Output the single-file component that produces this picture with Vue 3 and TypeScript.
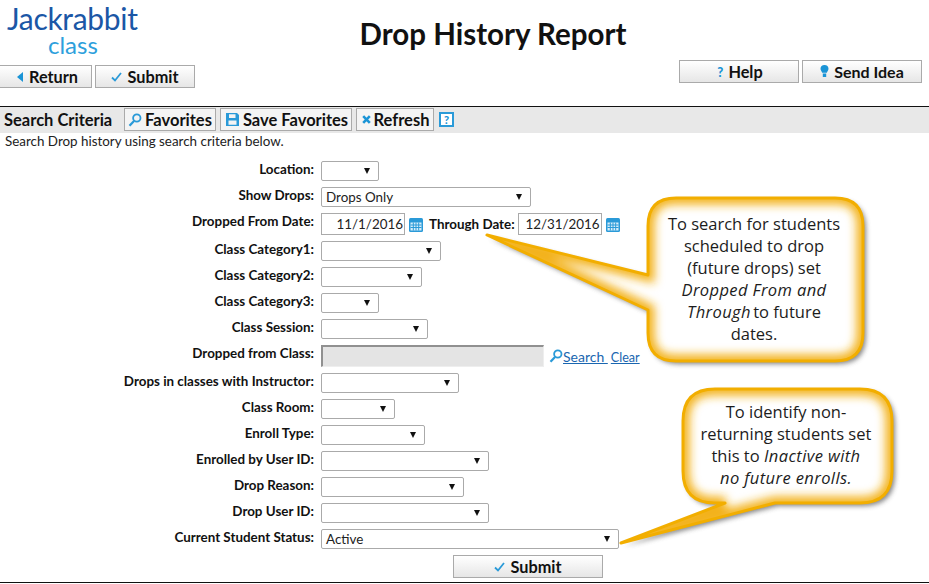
<script setup lang="ts">
interface Row { label: string; width?: number; value?: string; kind?: string }
const rows: Row[] = [
  { label: 'Location:', width: 58 },
  { label: 'Show Drops:', width: 210, value: 'Drops Only' },
  { label: 'Dropped From Date:', kind: 'dates' },
  { label: 'Class Category1:', width: 120 },
  { label: 'Class Category2:', width: 101 },
  { label: 'Class Category3:', width: 58 },
  { label: 'Class Session:', width: 107 },
  { label: 'Dropped from Class:', kind: 'search' },
  { label: 'Drops in classes with Instructor:', width: 138 },
  { label: 'Class Room:', width: 74 },
  { label: 'Enroll Type:', width: 104 },
  { label: 'Enrolled by User ID:', width: 168 },
  { label: 'Drop Reason:', width: 143 },
  { label: 'Drop User ID:', width: 168 },
  { label: 'Current Student Status:', width: 298, value: 'Active' },
]
const callout1 = 'M676 198H835Q863 198 863 226V333Q863 361 835 361H676Q648 361 648 333V310L487 235L648 275V226Q648 198 676 198Z'
const callout2 = 'M715 389H860Q892 389 892 421V471Q892 503 860 503H775L621 543L725 503H715Q683 503 683 471V421Q683 389 715 389Z'
</script>

<template>
  <div class="page">
    <header class="top">
      <div class="left">
        <div class="logo">
          <div class="logo-main">Jackrabbit</div>
          <div class="logo-sub">class</div>
        </div>
        <div class="btns">
          <button class="btn b-return">
            <svg width="7" height="10" viewBox="0 0 7 10"><path d="M6 0V10L0 5Z" fill="#1a94d6" /></svg>
            Return
          </button>
          <button class="btn b-submit">
            <svg width="11" height="10" viewBox="0 0 11 10"><path d="M1 5.5 4 8.5 10 1" fill="none" stroke="#2a9ad8" stroke-width="1.8" /></svg>
            Submit
          </button>
        </div>
      </div>
      <h1>Drop History Report</h1>
      <div class="right">
        <button class="btn b-top b-help">
          <span class="q">?</span>
          Help
        </button>
        <button class="btn b-top b-idea">
          <svg width="9" height="13" viewBox="0 0 9 13"><path d="M4.5 0C2 0 .5 1.700.5 3.700c0 1.600 1.200 2.500 1.700 4H6.800c.5-1.500 1.700-2.400 1.700-4C8.500 1.700 7 0 4.500 0ZM2.800 8.500H6.200V12H2.800Z" fill="#1a94d6" /></svg>
          Send Idea
        </button>
      </div>
    </header>

    <section class="bar">
      <span class="bar-title">Search Criteria</span>
      <button class="tool t-fav">
        <svg width="14" height="14" viewBox="0 0 14 14"><circle cx="8.800" cy="5" r="3.700" fill="none" stroke="#2a9ad8" stroke-width="1.800" /><path d="M6 8 1.500 12.800" stroke="#2a9ad8" stroke-width="2.200" /></svg>
        Favorites
      </button>
      <button class="tool t-save">
        <svg width="13" height="13" viewBox="0 0 13 13"><path fill-rule="evenodd" d="M0 0H11L13 2V13H0ZM3 1.200V5H9.500V1.200ZM2.500 7.500V11.800H10.500V7.500Z" fill="#2a9ad8" /></svg>
        Save Favorites
      </button>
      <button class="tool t-refresh">
        <svg width="9" height="9" viewBox="0 0 9 9"><path d="M1.200 1.200 7.800 7.800M7.800 1.200 1.200 7.800" stroke="#1a94d6" stroke-width="2.600" /></svg>
        Refresh
      </button>
      <span class="helpbox">?</span>
    </section>

    <p class="desc">Search Drop history using search criteria below.</p>

    <form class="form" @submit.prevent>
      <div v-for="r in rows" :key="r.label" class="row" :class="{ tall: r.kind }">
        <label>{{ r.label }}</label>
        <div class="ctl">
          <template v-if="r.kind === 'dates'">
            <span class="date d1">11/1/2016</span>
            <svg class="cal" width="14" height="14" viewBox="0 0 14 14"><rect width="14" height="14" y="0" rx="1.500" fill="#2a9ad8" /><rect x="1.500" y="4.500" width="11" height="8" fill="#d8eefa" /><path d="M1.500 7H12.500M1.500 9.500H12.500M4.300 4.500V12.500M7 4.500V12.500M9.700 4.500V12.500" stroke="#2a9ad8" stroke-width="1" /></svg>
            <b class="through">Through Date:</b>
            <span class="date d2">12/31/2016</span>
            <svg class="cal" width="14" height="14" viewBox="0 0 14 14"><rect width="14" height="14" y="0" rx="1.500" fill="#2a9ad8" /><rect x="1.500" y="4.500" width="11" height="8" fill="#d8eefa" /><path d="M1.500 7H12.500M1.500 9.500H12.500M4.300 4.500V12.500M7 4.500V12.500M9.700 4.500V12.500" stroke="#2a9ad8" stroke-width="1" /></svg>
          </template>
          <template v-else-if="r.kind === 'search'">
            <span class="readonly"></span>
            <svg class="mag" width="14" height="14" viewBox="0 0 14 14"><circle cx="8.800" cy="5" r="3.700" fill="none" stroke="#2a9ad8" stroke-width="1.800" /><path d="M6 8 1.500 12.800" stroke="#2a9ad8" stroke-width="2.200" /></svg>
            <a class="l-search">Search </a>
            <a class="l-clear">Clear</a>
          </template>
          <div v-else class="sel" :style="{ width: r.width + 'px' }">
            <span>{{ r.value }}</span>
            <i class="arrow"></i>
          </div>
        </div>
      </div>
      <div class="submit-row">
        <button class="btn b-bottom">
          <svg width="11" height="10" viewBox="0 0 11 10"><path d="M1 5.500 4 8.500 10 1" fill="none" stroke="#2a9ad8" stroke-width="1.800" /></svg>
          Submit
        </button>
      </div>
    </form>

    <svg class="overlay" width="929" height="584" viewBox="0 0 929 584">
      <defs>
        <filter id="glow" x="-20%" y="-20%" width="140%" height="140%"><feGaussianBlur stdDeviation="5" /></filter>
        <filter id="shadow" x="-20%" y="-20%" width="140%" height="140%"><feGaussianBlur stdDeviation="2.500" /></filter>
        <clipPath id="c1"><path :d="callout1" /></clipPath>
        <clipPath id="c2"><path :d="callout2" /></clipPath>
      </defs>
      <path :d="callout1" transform="translate(3 3)" fill="#666" opacity=".8" filter="url(#shadow)" />
      <path :d="callout1" fill="#fff" />
      <g clip-path="url(#c1)"><path :d="callout1" fill="none" stroke="#f3b21a" stroke-width="13" filter="url(#glow)" /></g>
      <path :d="callout1" fill="none" stroke="#f2ae00" stroke-width="3" stroke-linejoin="round" />
      <path :d="callout2" transform="translate(3 3)" fill="#666" opacity=".8" filter="url(#shadow)" />
      <path :d="callout2" fill="#fff" />
      <g clip-path="url(#c2)"><path :d="callout2" fill="none" stroke="#f3b21a" stroke-width="13" filter="url(#glow)" /></g>
      <path :d="callout2" fill="none" stroke="#f2ae00" stroke-width="3" stroke-linejoin="round" />
    </svg>

    <div class="note n1">
      <div>To search for students</div>
      <div>scheduled to drop</div>
      <div>(future drops) set</div>
      <div><em>Dropped From and</em></div>
      <div><em class="tight">Through</em> to future</div>
      <div>dates.</div>
    </div>
    <div class="note n2">
      <div>To identify non-</div>
      <div>returning students set</div>
      <div>this to <em>Inactive with</em></div>
      <div><em>no future enrolls.</em></div>
    </div>
  </div>
</template>

<style>
html, body { margin: 0; background: #fff; }
</style>

<style scoped>
.page {
  position: relative;
  width: 929px;
  height: 584px;
  overflow: hidden;
  font-family: Lato, "Liberation Sans", sans-serif;
  color: #111;
  background: #fff;
  box-sizing: border-box;
}
.top { position: relative; height: 106px; display: flex; }
.left { width: 300px; }
.logo { height: 65px; padding-left: 7px; color: #1b57a6; box-sizing: border-box; }
.logo-main { font-size: 30px; font-weight: 400; line-height: 36px; letter-spacing: -.3px; }
.logo-sub { font-size: 24px; font-weight: 400; line-height: 29px; margin-top: -6px; color: #2d9fdc; padding-left: 41px; }
.btns { display: flex; gap: 3px; margin-left: -1px; }
.btn {
  font: 700 16.300px Lato, sans-serif;
  color: #111;
  height: 23px;
  padding: 0;
  border: 1px solid #aaa;
  background: linear-gradient(#fff, #e6e6e6);
  display: flex;
  align-items: center;
  justify-content: center;
  gap: 5px;
  box-sizing: border-box;
}
.b-return { width: 93px; padding-left: 4px; }
.b-submit { width: 100px; }
h1 {
  position: absolute;
  left: 0;
  right: 0;
  top: 15px;
  margin: 0;
  font: 700 29.500px/38px Lato, sans-serif;
  text-align: center;
  color: #111;
  padding-left: 57px;
}
.right { position: absolute; right: 7px; top: 60px; display: flex; gap: 3px; }
.b-top { width: 120px; }
.b-help { padding-left: 2px; }
.b-idea { font-size: 16px; }
.q { color: #1a94d6; font-size: 13px; font-weight: 900; }
.bar {
  height: 27px;
  border-top: 1px solid #111;
  background: #e8e8e8;
  display: flex;
  align-items: center;
  box-sizing: border-box;
  padding: 0 0 1px 4px;
}
.bar-title { font-weight: 700; font-size: 16.500px; width: 120px; }
.tool {
  font: 700 16.500px Lato, sans-serif;
  color: #111;
  height: 23px;
  border: 1px solid #aaa;
  background: #f4f4f4;
  padding: 0;
  display: flex;
  align-items: center;
  justify-content: center;
  gap: 3px;
  box-sizing: border-box;
  margin-right: 4px;
}
.t-fav { width: 92px; }
.t-save { width: 132px; gap: 4px; padding-left: 2px; }
.t-refresh { width: 78px; padding-left: 1px; }
.helpbox {
  width: 11px;
  height: 11px;
  border: 2px solid #2a9ad8;
  background: #fff;
  color: #1a94d6;
  font: 900 11px/11px Lato, sans-serif;
  text-align: center;
  margin-left: 1px;
  box-sizing: content-box;
}
.desc { margin: 0; padding-left: 5px; font-size: 13.400px; line-height: 17px; height: 25px; color: #222; }
.form { display: block; }
.row { display: grid; grid-template-columns: 314px 1fr; column-gap: 7px; height: 26px; align-items: center; font-size: 13.400px; }
.row.tall { height: 28px; }
.row label { text-align: right; font-weight: 700; margin-bottom: 4px; }
.row.tall label { margin-bottom: 6px; }
.ctl { display: flex; align-items: center; }
.sel {
  height: 20px;
  border: 1px solid #aaa;
  border-radius: 2px;
  box-sizing: border-box;
  display: flex;
  align-items: center;
  justify-content: space-between;
  padding: 0 8px 0 4px;
  font-size: 13.400px;
  color: #222;
  background: #fff;
}
.arrow { width: 0; height: 0; border-left: 3.500px solid transparent; border-right: 3.500px solid transparent; border-top: 6px solid #111; }
.date {
  height: 22px;
  border: 1px solid #aaa;
  box-sizing: border-box;
  text-align: right;
  padding-right: 1px;
  font-size: 13.400px;
  line-height: 20px;
  color: #222;
}
.d1 { width: 84px; }
.d2 { width: 84px; }
.cal { margin-left: 4px; margin-top: 2px; }
.through { margin: 0 3px 0 6px; font-size: 13.400px; }
.readonly {
  width: 223px;
  height: 22px;
  background: #e4e4e4;
  border-top: 2px solid #909090;
  border-left: 2px solid #909090;
  border-right: 1px solid #eee;
  border-bottom: 1px solid #eee;
  box-sizing: border-box;
}
.mag { margin-left: 5px; }
a { color: #1a66b0; text-decoration: underline; }
.l-search { font-size: 14px; white-space: pre; }
.l-clear { margin-left: 3px; font-size: 12.600px; margin-top: 2px; }
.submit-row { display: flex; padding-left: 453px; padding-top: 3px; }
.b-bottom { width: 150px; }
.page::after { content: ""; position: absolute; left: 0; right: 0; top: 582px; height: 1px; background: #111; }
.overlay { position: absolute; left: 0; top: 0; pointer-events: none; }
.note {
  position: absolute;
  font: 400 16.500px/22px "Open Sans", sans-serif;
  color: #1c1c1c;
  text-align: center;
  white-space: nowrap;
}
.note em { letter-spacing: .4px; }
.note em.tight { margin-right: -2px; }
.n1 { left: 654px; width: 200px; top: 213px; }
.n2 { left: 686px; width: 200px; top: 401px; }
</style>
